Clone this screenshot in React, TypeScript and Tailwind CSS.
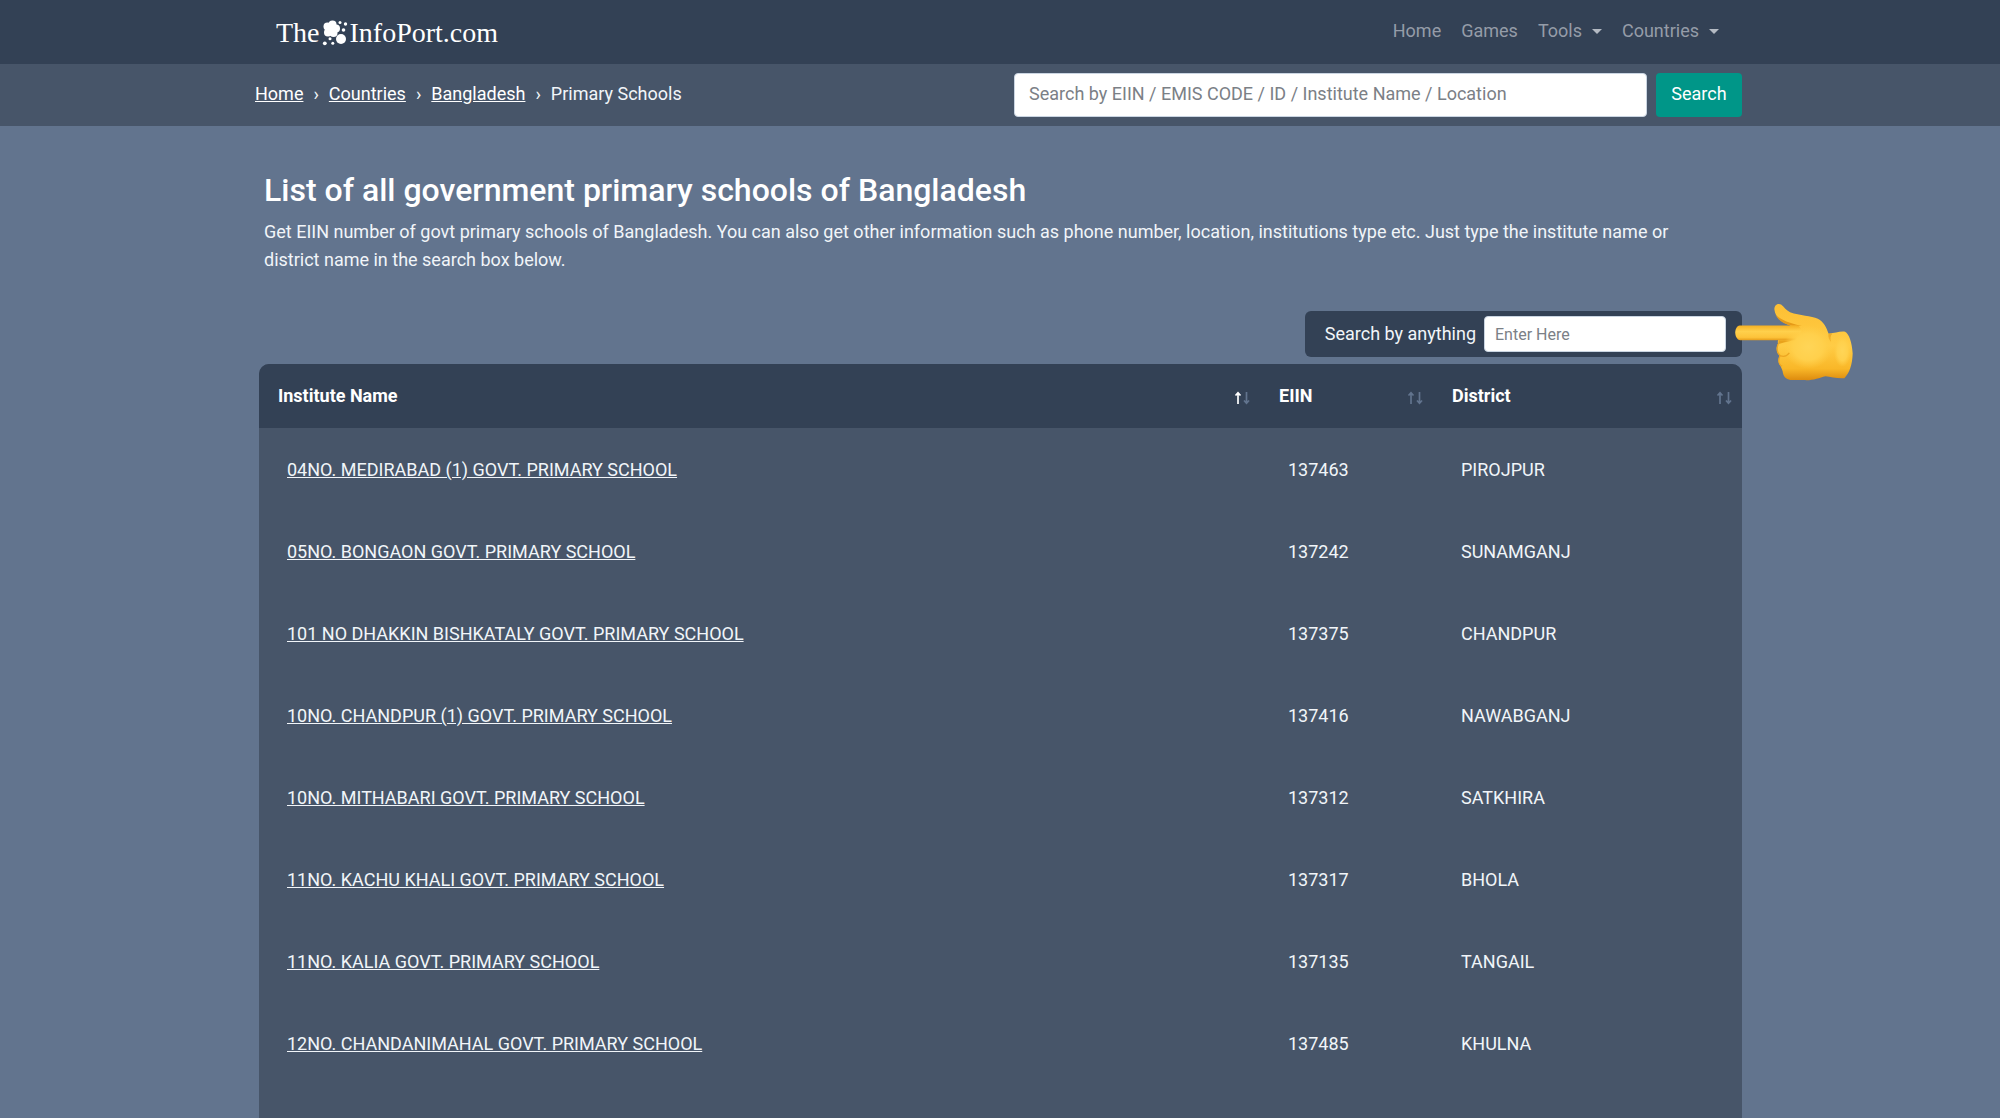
const NAV_LINKS = [
  { label: "Home", menu: false },
  { label: "Games", menu: false },
  { label: "Tools", menu: true },
  { label: "Countries", menu: true },
];

const CRUMBS = ["Home", "Countries", "Bangladesh"];

const SCHOOLS = [
  { name: "04NO. MEDIRABAD (1) GOVT. PRIMARY SCHOOL", eiin: "137463", district: "PIROJPUR" },
  { name: "05NO. BONGAON GOVT. PRIMARY SCHOOL", eiin: "137242", district: "SUNAMGANJ" },
  { name: "101 NO DHAKKIN BISHKATALY GOVT. PRIMARY SCHOOL", eiin: "137375", district: "CHANDPUR" },
  { name: "10NO. CHANDPUR (1) GOVT. PRIMARY SCHOOL", eiin: "137416", district: "NAWABGANJ" },
  { name: "10NO. MITHABARI GOVT. PRIMARY SCHOOL", eiin: "137312", district: "SATKHIRA" },
  { name: "11NO. KACHU KHALI GOVT. PRIMARY SCHOOL", eiin: "137317", district: "BHOLA" },
  { name: "11NO. KALIA GOVT. PRIMARY SCHOOL", eiin: "137135", district: "TANGAIL" },
  { name: "12NO. CHANDANIMAHAL GOVT. PRIMARY SCHOOL", eiin: "137485", district: "KHULNA" },
];

const COLUMNS = [
  { label: "Institute Name", width: "", sorted: true },
  { label: "EIIN", width: "w-[173px]", sorted: false },
  { label: "District", width: "w-[309px]", sorted: false },
];

function LogoMark() {
  return (
    <svg viewBox="0 0 26 26" className="mx-0.5 h-[26px] w-[26px]" fill="currentColor" aria-hidden="true">
      <circle cx="5.5" cy="6.5" r="4" />
      <circle cx="10.5" cy="4.5" r="4" />
      <circle cx="14" cy="8.5" r="4" />
      <circle cx="11.5" cy="13" r="4" />
      <circle cx="6" cy="12.5" r="4" />
      <circle cx="10" cy="9" r="5" />
      <circle cx="19" cy="19" r="5" />
      <circle cx="18" cy="2.5" r="1.5" />
      <circle cx="23.5" cy="4" r="1.7" />
      <circle cx="21.5" cy="10" r="1.8" />
      <circle cx="8" cy="18.7" r="1.5" />
      <circle cx="2.8" cy="23.3" r="1.9" />
      <circle cx="10.8" cy="23.3" r="1.5" />
    </svg>
  );
}

function SortArrows({ sorted }: { sorted: boolean }) {
  return (
    <svg viewBox="0 0 16 14" className="mt-1 h-3.5 w-4" fill="none" strokeWidth="1.7" aria-hidden="true">
      <path d="M4 13V2M1.5 4.5 4 1.7 6.5 4.5" className={sorted ? "stroke-white" : "stroke-slate-500"} />
      <path d="M12.5 1V12M10 9.5 12.5 12.3 15 9.5" className="stroke-slate-500" />
    </svg>
  );
}

function PointingHand() {
  return (
    <svg viewBox="104 40 356 234" className="absolute -top-2 -right-[111px] h-[78px] w-[118px]" aria-hidden="true">
      <defs>
        <linearGradient id="skin" x1="0" y1="0" x2="0" y2="1">
          <stop offset="0" stopColor="#fdbf33" />
          <stop offset="0.55" stopColor="#ffcc45" />
          <stop offset="0.85" stopColor="#f9b728" />
          <stop offset="1" stopColor="#dd8b0e" />
        </linearGradient>
        <linearGradient id="finger" x1="0" y1="0" x2="0" y2="1">
          <stop offset="0" stopColor="#f5b023" />
          <stop offset="0.4" stopColor="#ffd04c" />
          <stop offset="0.8" stopColor="#fdc33a" />
          <stop offset="1" stopColor="#e59a18" />
        </linearGradient>
        <radialGradient id="palm">
          <stop offset="0" stopColor="#ffd557" />
          <stop offset="0.6" stopColor="#ffd04c" />
          <stop offset="1" stopColor="#ffcc45" stopOpacity="0" />
        </radialGradient>
      </defs>
      <path
        d="M223 60C221 46 234 38 243 44C253 52 258 62 270 67C300 78 334 77 354 87C372 97 380 113 386 131C402 132 418 124 436 126C448 132 457 158 459 192C458 226 449 252 434 266C414 268 393 262 377 260C358 265 340 273 314 272H276C262 271 252 265 249 252C248 243 244 235 240 227C234 219 233 207 240 198C230 190 226 174 234 163C231 154 236 145 246 140L272 108C242 98 225 80 223 60Z"
        fill="url(#skin)"
      />
      <path d="M226 74C236 94 254 104 276 108H306C278 103 246 94 226 74Z" fill="#e69a18" />
      <path d="M386 131C384 143 389 151 394 157C391 147 391 138 398 131Z" fill="#e59a18" opacity="0.6" />
      <path d="M118 107H290C310 107 310 152 280 152H120C100 150 100 109 118 107Z" fill="url(#finger)" />
      <path d="M236 152H278C262 158 246 159 234 164Z" fill="#e9a21c" />
      <ellipse cx="325" cy="172" rx="74" ry="66" fill="url(#palm)" />
      <ellipse cx="428" cy="184" rx="26" ry="48" fill="url(#palm)" />
      <path
        d="M234 163C229 178 232 191 240 198C252 203 262 198 268 190M240 198C234 212 236 225 246 230"
        fill="none"
        stroke="#eca622"
        strokeWidth="4"
      />
    </svg>
  );
}

export default function App() {
  return (
    <div className="flex min-h-screen flex-col bg-slate-500 bg-[#64748b] font-['Roboto',sans-serif] text-[18px] leading-7 text-slate-100">
      <header className="bg-[#334155]">
        <div className="mx-auto flex h-16 w-full max-w-[1516px] items-center justify-between pr-[39px] pl-[34px]">
          <a href="#" className="flex items-center pt-0.5 font-['Liberation_Serif',serif] text-[28px] text-white">
            The
            <LogoMark />
            InfoPort.com
          </a>
          <nav className="flex gap-5 pb-0.5">
            {NAV_LINKS.map((link) => (
              <a key={link.label} href="#" className="flex items-center gap-2.5 text-[#959ca8]">
                {link.label}
                {link.menu && (
                  <span className="border-x-[5px] border-t-[5px] border-x-transparent border-t-[#b4bac3]" />
                )}
              </a>
            ))}
          </nav>
        </div>
      </header>

      <div className="bg-[#475569]">
        <div className="mx-auto flex w-full max-w-[1516px] items-center justify-between py-[9px] pr-4 pl-[13px]">
          <nav aria-label="Breadcrumb" className="flex gap-2.5 pb-0.5">
            {CRUMBS.map((crumb) => (
              <span key={crumb} className="flex gap-2.5">
                <a href="#" className="text-white underline">{crumb}</a>
                <span>›</span>
              </span>
            ))}
            <span>Primary Schools</span>
          </nav>
          <form className="flex gap-[9px]">
            <input
              type="search"
              aria-label="Search schools"
              placeholder="Search by EIIN / EMIS CODE / ID / Institute Name / Location"
              className="h-11 w-[633px] rounded border border-slate-300 bg-white px-3.5 pb-1 text-gray-800 placeholder:text-[#7b8086]"
            />
            <button type="button" className="h-11 w-[86px] rounded bg-[#009688] pb-0.5 text-white">
              Search
            </button>
          </form>
        </div>
      </div>

      <main className="mx-auto flex w-full max-w-[1516px] grow flex-col pr-4 pl-[17px]">
        <section className="px-[5px] pt-11">
          <h1 className="text-[32px] leading-10 font-medium text-white">
            List of all government primary schools of Bangladesh
          </h1>
          <p className="mt-2 max-w-[1450px]">
            Get EIIN number of govt primary schools of Bangladesh. You can also get other information such as phone number,
            location, institutions type etc. Just type the institute name or district name in the search box below.
          </p>
        </section>

        <div className="relative mt-[37px] flex items-center gap-2 self-end rounded-md bg-[#334155] py-[5px] pr-4 pl-5">
          <label htmlFor="filter">Search by anything</label>
          <input
            id="filter"
            type="search"
            placeholder="Enter Here"
            className="h-9 w-[242px] rounded border border-slate-300 bg-white px-2.5 text-[16px] text-gray-800 placeholder:text-[#7b8086]"
          />
          <PointingHand />
        </div>

        <div className="mt-[7px] grow overflow-hidden rounded-t-[10px] bg-[#475569]">
          <table className="w-full table-fixed text-left">
            <thead className="bg-[#334155]">
              <tr>
                {COLUMNS.map((col) => (
                  <th key={col.label} className={`h-16 pr-2.5 pl-[19px] font-bold text-white ${col.width}`}>
                    <span className="flex items-center justify-between">
                      {col.label}
                      <SortArrows sorted={col.sorted} />
                    </span>
                  </th>
                ))}
              </tr>
            </thead>
            <tbody>
              {SCHOOLS.map((school) => (
                <tr key={school.eiin}>
                  <td className="pt-7 pb-[26px] pl-7">
                    <a href="#" className="underline">{school.name}</a>
                  </td>
                  <td className="pt-7 pb-[26px] pl-7">{school.eiin}</td>
                  <td className="pt-7 pb-[26px] pl-7">{school.district}</td>
                </tr>
              ))}
            </tbody>
          </table>
        </div>
      </main>
    </div>
  );
}
